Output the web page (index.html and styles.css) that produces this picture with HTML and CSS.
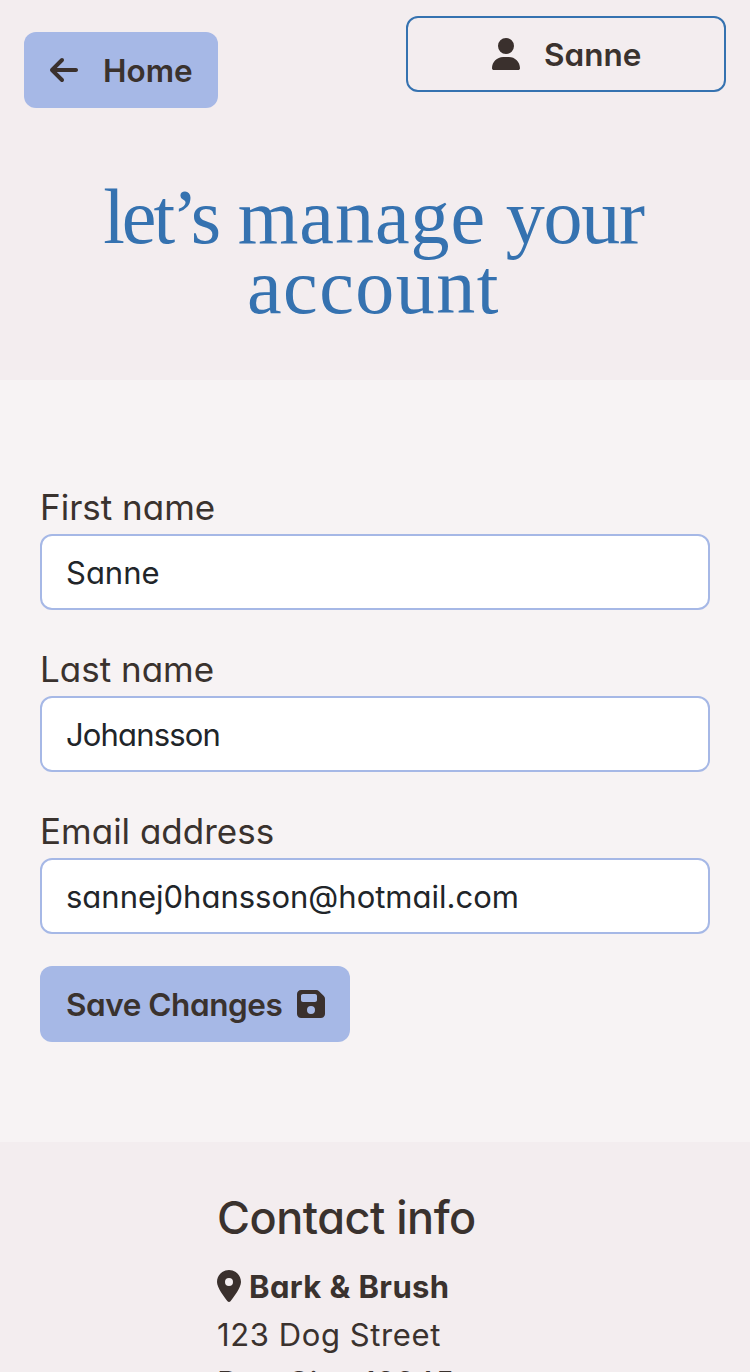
FILE: index.html
```html
<!DOCTYPE html>
<html lang="en">
<head>
<meta charset="utf-8">
<title>Account</title>
<link rel="stylesheet" href="styles.css">
</head>
<body>
<header class="hero">
  <nav class="bar">
    <a class="btn home"><svg class="icon" viewBox="0 0 448 512"><path d="M9.4 233.4c-12.500 12.500-12.500 32.800 0 45.300l160 160c12.500 12.500 32.800 12.500 45.300 0s12.500-32.800 0-45.300L109.200 288 416 288c17.700 0 32-14.300 32-32s-14.300-32-32-32l-306.700 0L214.600 118.600c12.500-12.500 12.500-32.800 0-45.300s-32.800-12.500-45.300 0l-160 160z"/></svg><span class="text t-home">Home</span></a>
    <a class="btn user"><svg class="icon" viewBox="0 0 448 512"><path d="M224 256A128 128 0 1 0 224 0a128 128 0 1 0 0 256zm-45.700 48C79.800 304 0 383.800 0 482.300C0 498.700 13.300 512 29.700 512l388.600 0c16.400 0 29.700-13.300 29.700-29.700C448 383.800 368.200 304 269.700 304l-91.400 0z"/></svg><span class="text t-user">Sanne</span></a>
  </nav>
  <h1 class="title"><span class="w-lets">let’s</span> <span class="w-manage">manage</span> <span class="w-your">your</span><br><span class="w-account">account</span></h1>
</header>
<main class="content">
  <form class="form">
    <div class="field"><label class="label" for="first">First name</label><input class="input i-first" id="first" value="Sanne"></div>
    <div class="field"><label class="label" for="last">Last name</label><input class="input i-last" id="last" value="Johansson"></div>
    <div class="field"><label class="label" for="email">Email address</label><input class="input" id="email" value="sannej0hansson@hotmail.com"></div>
    <button class="btn save" type="button"><span class="text t-save">Save Changes</span><svg class="icon" viewBox="0 0 448 512"><path d="M64 32C28.700 32 0 60.700 0 96L0 416c0 35.300 28.700 64 64 64l320 0c35.300 0 64-28.700 64-64l0-242.700c0-17-6.700-33.300-18.700-45.300L352 50.700C340 38.700 323.700 32 306.700 32L64 32zm0 96c0-17.700 14.300-32 32-32l192 0c17.700 0 32 14.300 32 32l0 64c0 17.700-14.300 32-32 32L96 224c-17.700 0-32-14.300-32-32l0-64zM224 288a64 64 0 1 1 0 128 64 64 0 1 1 0-128z"/></svg></button>
  </form>
</main>
<footer class="contact">
  <h2 class="contact-title">Contact info</h2>
  <div class="line name"><svg class="pin" viewBox="0 0 384 512"><path d="M215.700 499.200C267 435 384 279.400 384 192C384 86 298 0 192 0S0 86 0 192c0 87.400 117 243 168.300 307.200c12.300 15.300 35.100 15.300 47.400 0zM192 128a64 64 0 1 1 0 128 64 64 0 1 1 0-128z"/></svg><b class="text t-brand">Bark &amp; Brush</b></div>
  <div class="line t-street">123 Dog Street</div>
  <div class="line t-city">Dog City, 12345</div>
</footer>
</body>
</html>
```
FILE: styles.css
```css
* { box-sizing: border-box; }
body {
  margin: 0;
  height: 1372px;
  overflow: hidden;
  background: #f7f3f4;
  color: #3a322e;
  font: 400 31px/48px Inter, "Liberation Sans", sans-serif;
  font-feature-settings: "cv11";
}
.hero { height: 380px; background: #f3edef; padding: 16px 24px 0; }
.bar { display: flex; justify-content: space-between; align-items: flex-start; }
.btn {
  display: flex;
  align-items: center;
  height: 76px;
  padding: 0 26px;
  border: 0;
  border-radius: 12px;
  background: #a6b8e6;
  color: inherit;
  font: inherit;
  font-size: 31.5px;
  font-weight: 570;
  white-space: nowrap;
}
.text { padding-top: 2px; }
.icon { width: 28px; height: 32px; fill: #3a302d; flex: none; }
.home { width: 194px; margin-top: 16px; gap: 25px; }
.user { width: 320px; padding-left: 84px; gap: 24px; background: none; border: 2px solid #3572b0; }
.t-save { letter-spacing: -0.45px; }
.title {
  margin: 74px 3px 0 0;
  color: #3572b0;
  font: 400 78px/70px "Liberation Serif", serif;
  text-align: center;
  white-space: nowrap;
}
.w-lets { letter-spacing: -3px; }
.w-manage { letter-spacing: 1px; }
.w-your { letter-spacing: -1.2px; }
.w-account { letter-spacing: 1.5px; }
.content { height: 762px; padding: 100px 40px 0; }
.field { height: 162px; }
.label { display: block; height: 54px; font-size: 35px; line-height: 55px; }
.input {
  display: block;
  width: 100%;
  height: 76px;
  padding: 0 24px;
  border: 2px solid #a6b8e6;
  border-radius: 12px;
  background: #fff;
  color: #212529;
  font: inherit;
  font-feature-settings: inherit;
}
.i-last { letter-spacing: -0.85px; }
.save { width: 310px; justify-content: space-between; padding-right: 25px; font-feature-settings: inherit; }
.contact { height: 230px; padding: 48px 0 0 217px; background: #f3edef; overflow: hidden; }
.contact-title { margin: 0 0 16px; font-size: 45px; font-weight: 480; line-height: 56px; letter-spacing: -0.5px; }
.line { height: 48px; white-space: nowrap; }
.name { display: flex; align-items: center; gap: 8px; }
.pin { width: 24px; height: 32px; fill: #3a302d; }
.t-brand { letter-spacing: 0.4px; }
.t-street { padding-top: 1px; letter-spacing: 0.6px; }
.t-city { padding-top: 1px; letter-spacing: 0.3px; }
```
